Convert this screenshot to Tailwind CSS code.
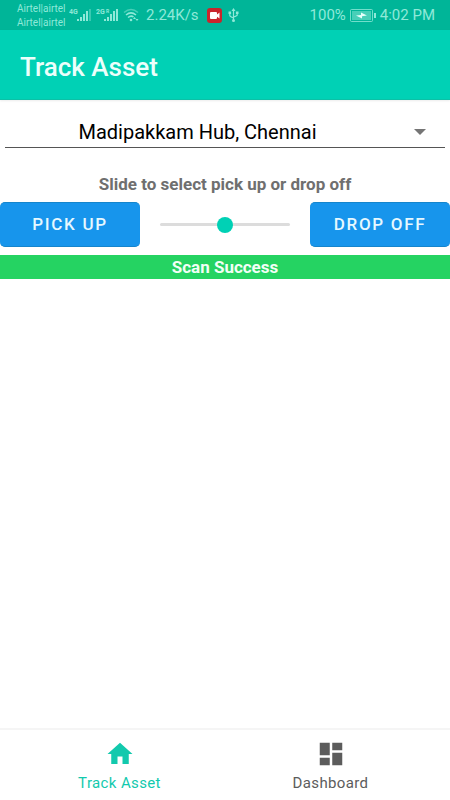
<!DOCTYPE html>
<html lang="en">
<head>
<meta charset="utf-8">
<meta name="viewport" content="width=device-width, initial-scale=1">
<title>Track Asset</title>
<script src="https://cdn.jsdelivr.net/npm/@tailwindcss/browser@4"></script>
</head>
<body class="flex min-h-screen flex-col bg-white font-['Roboto',sans-serif] text-black">
  <!-- Device status bar -->
  <div class="flex h-[30px] items-center justify-between bg-[#00b598] pr-[15px] pl-[17px] text-[#8fe9d8]">
    <div class="flex items-center">
      <div class="w-[52px] pt-[2px] text-[10px] leading-[14px] whitespace-nowrap"><p>Airtel|airtel</p><p>Airtel|airtel</p></div>
      <svg class="h-4 w-[23px]" viewBox="0 0 23 16" fill="currentColor" role="img" aria-label="4G signal">
        <text x="0" y="7" font-size="7" font-weight="700">4G</text>
        <path d="M8 12h2v2H8zM11 10h2v4h-2zM14 7h2v7h-2zM17 4h2v10h-2z"/><path opacity=".4" d="M20 2h2v12h-2z"/>
      </svg>
      <svg class="ml-1 h-4 w-[24px]" viewBox="0 0 24 16" fill="currentColor" role="img" aria-label="2G roaming signal">
        <text x="0" y="7" font-size="7" font-weight="700">2G</text><text x="10" y="6" font-size="5" font-weight="700">R</text>
        <path d="M8 12h2v2H8zM11 10h2v4h-2zM14 7h2v7h-2zM17 4h2v10h-2zM20 2h2v12h-2z"/>
      </svg>
      <svg class="ml-[3px] h-4 w-4" viewBox="0 0 16 16" fill="none" stroke="currentColor" stroke-width="1.5" role="img" aria-label="Wi-Fi">
        <path opacity=".5" d="M1 5.5Q8 -.5 15 5.5"/><path d="M3 8Q8 3.8 13 8M5 10.5Q8 8 10.500 10"/><circle cx="8" cy="13" r="1.300" fill="currentColor" stroke="none"/>
        <path stroke="none" fill="currentColor" d="M10 12l1.500-2 1.500 2zM12.500 12l1.500 2 1.500-2z"/>
      </svg>
      <span class="ml-[7px] text-[15px]">2.24K/s</span>
      <svg class="ml-2 h-[15px] w-[15px]" viewBox="0 0 15 15" role="img" aria-label="Screen recording">
        <rect width="15" height="15" rx="3" fill="#c9252c"/><path fill="#fff" d="M3 5q0-1 1-1h5q1 0 1 1v1.500L12.500 4.500v6L10 8.800V10q0 1-1 1H4q-1 0-1-1z"/>
      </svg>
      <svg class="ml-[6px] h-4 w-[11px]" viewBox="0 0 11 16" fill="none" stroke="currentColor" stroke-width="1.200" role="img" aria-label="USB">
        <path d="M5.500 3v10M1.800 6v2.500q0 1 3.700 2.500M9.200 6v2q0 1-3.700 2"/>
        <path fill="currentColor" stroke="none" d="M5.500 1l2 3h-4zM.5 4.500h2.600v2.600H.5zM7.900 4.500h2.600v2.600H7.900z"/><circle cx="5.500" cy="13.500" r="1.500" fill="currentColor" stroke="none"/>
      </svg>
    </div>
    <div class="flex items-center text-[15px]">
      <span>100%</span>
      <svg class="mx-1 h-[13px] w-[26px]" viewBox="0 0 26 13" role="img" aria-label="Battery charging">
        <rect x=".5" y=".5" width="22" height="12" rx="1" fill="none" stroke="currentColor" opacity=".8"/><rect x="2" y="2" width="19" height="9" fill="currentColor" opacity=".5"/>
        <path fill="#e6fffa" d="M6 6.500l5-.5V3.500l6 3-5 .7V9.500z"/><path fill="currentColor" d="M24 4h2v5h-2z"/>
      </svg>
      <span>4:02 PM</span>
    </div>
  </div>

  <header class="flex h-[70px] items-center border-b border-[#0cc0a6] bg-[#00d1b5] px-5 pt-1 shadow-[0_1px_2px_rgba(0,0,0,0.08)]">
    <h1 class="text-[26px] leading-8 font-medium text-[#ecfffb]">Track Asset</h1>
  </header>

  <main class="flex flex-1 flex-col">
    <div class="relative mx-[5px] mt-4">
      <select aria-label="Hub" class="block h-8 w-full appearance-none border-b border-[#555] bg-transparent pr-[55px] text-center text-[20px] [text-align-last:center]">
        <option>Madipakkam Hub, Chennai</option>
      </select>
      <svg class="pointer-events-none absolute top-[13px] right-[19px] h-[6px] w-3" viewBox="0 0 12 6" fill="#757575" aria-hidden="true"><path d="M0 0h12L6 6z"/></svg>
    </div>

    <label for="direction" class="mt-6 block text-center text-[17px] leading-6 font-bold text-[#6f6f6f]">Slide to select pick up or drop off</label>
    <div class="mt-[6px] flex items-center gap-5">
      <button type="button" class="h-[45px] w-[140px] rounded-[5px] border-y border-[#1585cc] bg-[#1795ec] text-[17px] font-medium tracking-widest text-[#e6f8ff]">PICK UP</button>
      <input id="direction" type="range" min="0" max="2" value="1" class="h-[3px] min-w-0 flex-1 appearance-none rounded-full bg-[#dcdcdc] [&::-webkit-slider-thumb]:h-4 [&::-webkit-slider-thumb]:w-4 [&::-webkit-slider-thumb]:appearance-none [&::-webkit-slider-thumb]:rounded-full [&::-webkit-slider-thumb]:bg-[#00d1b5]">
      <button type="button" class="h-[45px] w-[140px] rounded-[5px] border-y border-[#1585cc] bg-[#1795ec] text-[17px] font-medium tracking-widest text-[#e6f8ff]">DROP OFF</button>
    </div>
    <p role="status" class="mt-2 bg-[#25d362] text-center text-[17px] leading-6 font-bold text-[#f2fff6]">Scan Success</p>
  </main>

  <nav class="flex h-[72px] border-t-2 border-[#f5f5f5] px-[14px] text-[15px] leading-5 tracking-wide">
    <a href="#track" aria-current="page" class="flex flex-1 flex-col items-center pt-[9px] text-[#12c9ad]">
      <svg class="h-[30px] w-[30px]" viewBox="0 0 24 24" fill="currentColor" aria-hidden="true"><path d="M10 20v-6h4v6h5v-8h3L12 3 2 12h3v8z"/></svg>
      <span class="mt-1">Track Asset</span>
    </a>
    <a href="#dashboard" class="flex flex-1 flex-col items-center pt-[9px] text-[#5c5c5c]">
      <svg class="h-[30px] w-[30px]" viewBox="0 0 24 24" fill="currentColor" aria-hidden="true"><path d="M3 13h8V3H3v10zm0 8h8v-6H3v6zm10 0h8V11h-8v10zm0-18v6h8V3h-8z"/></svg>
      <span class="mt-1">Dashboard</span>
    </a>
  </nav>
</body>
</html>
